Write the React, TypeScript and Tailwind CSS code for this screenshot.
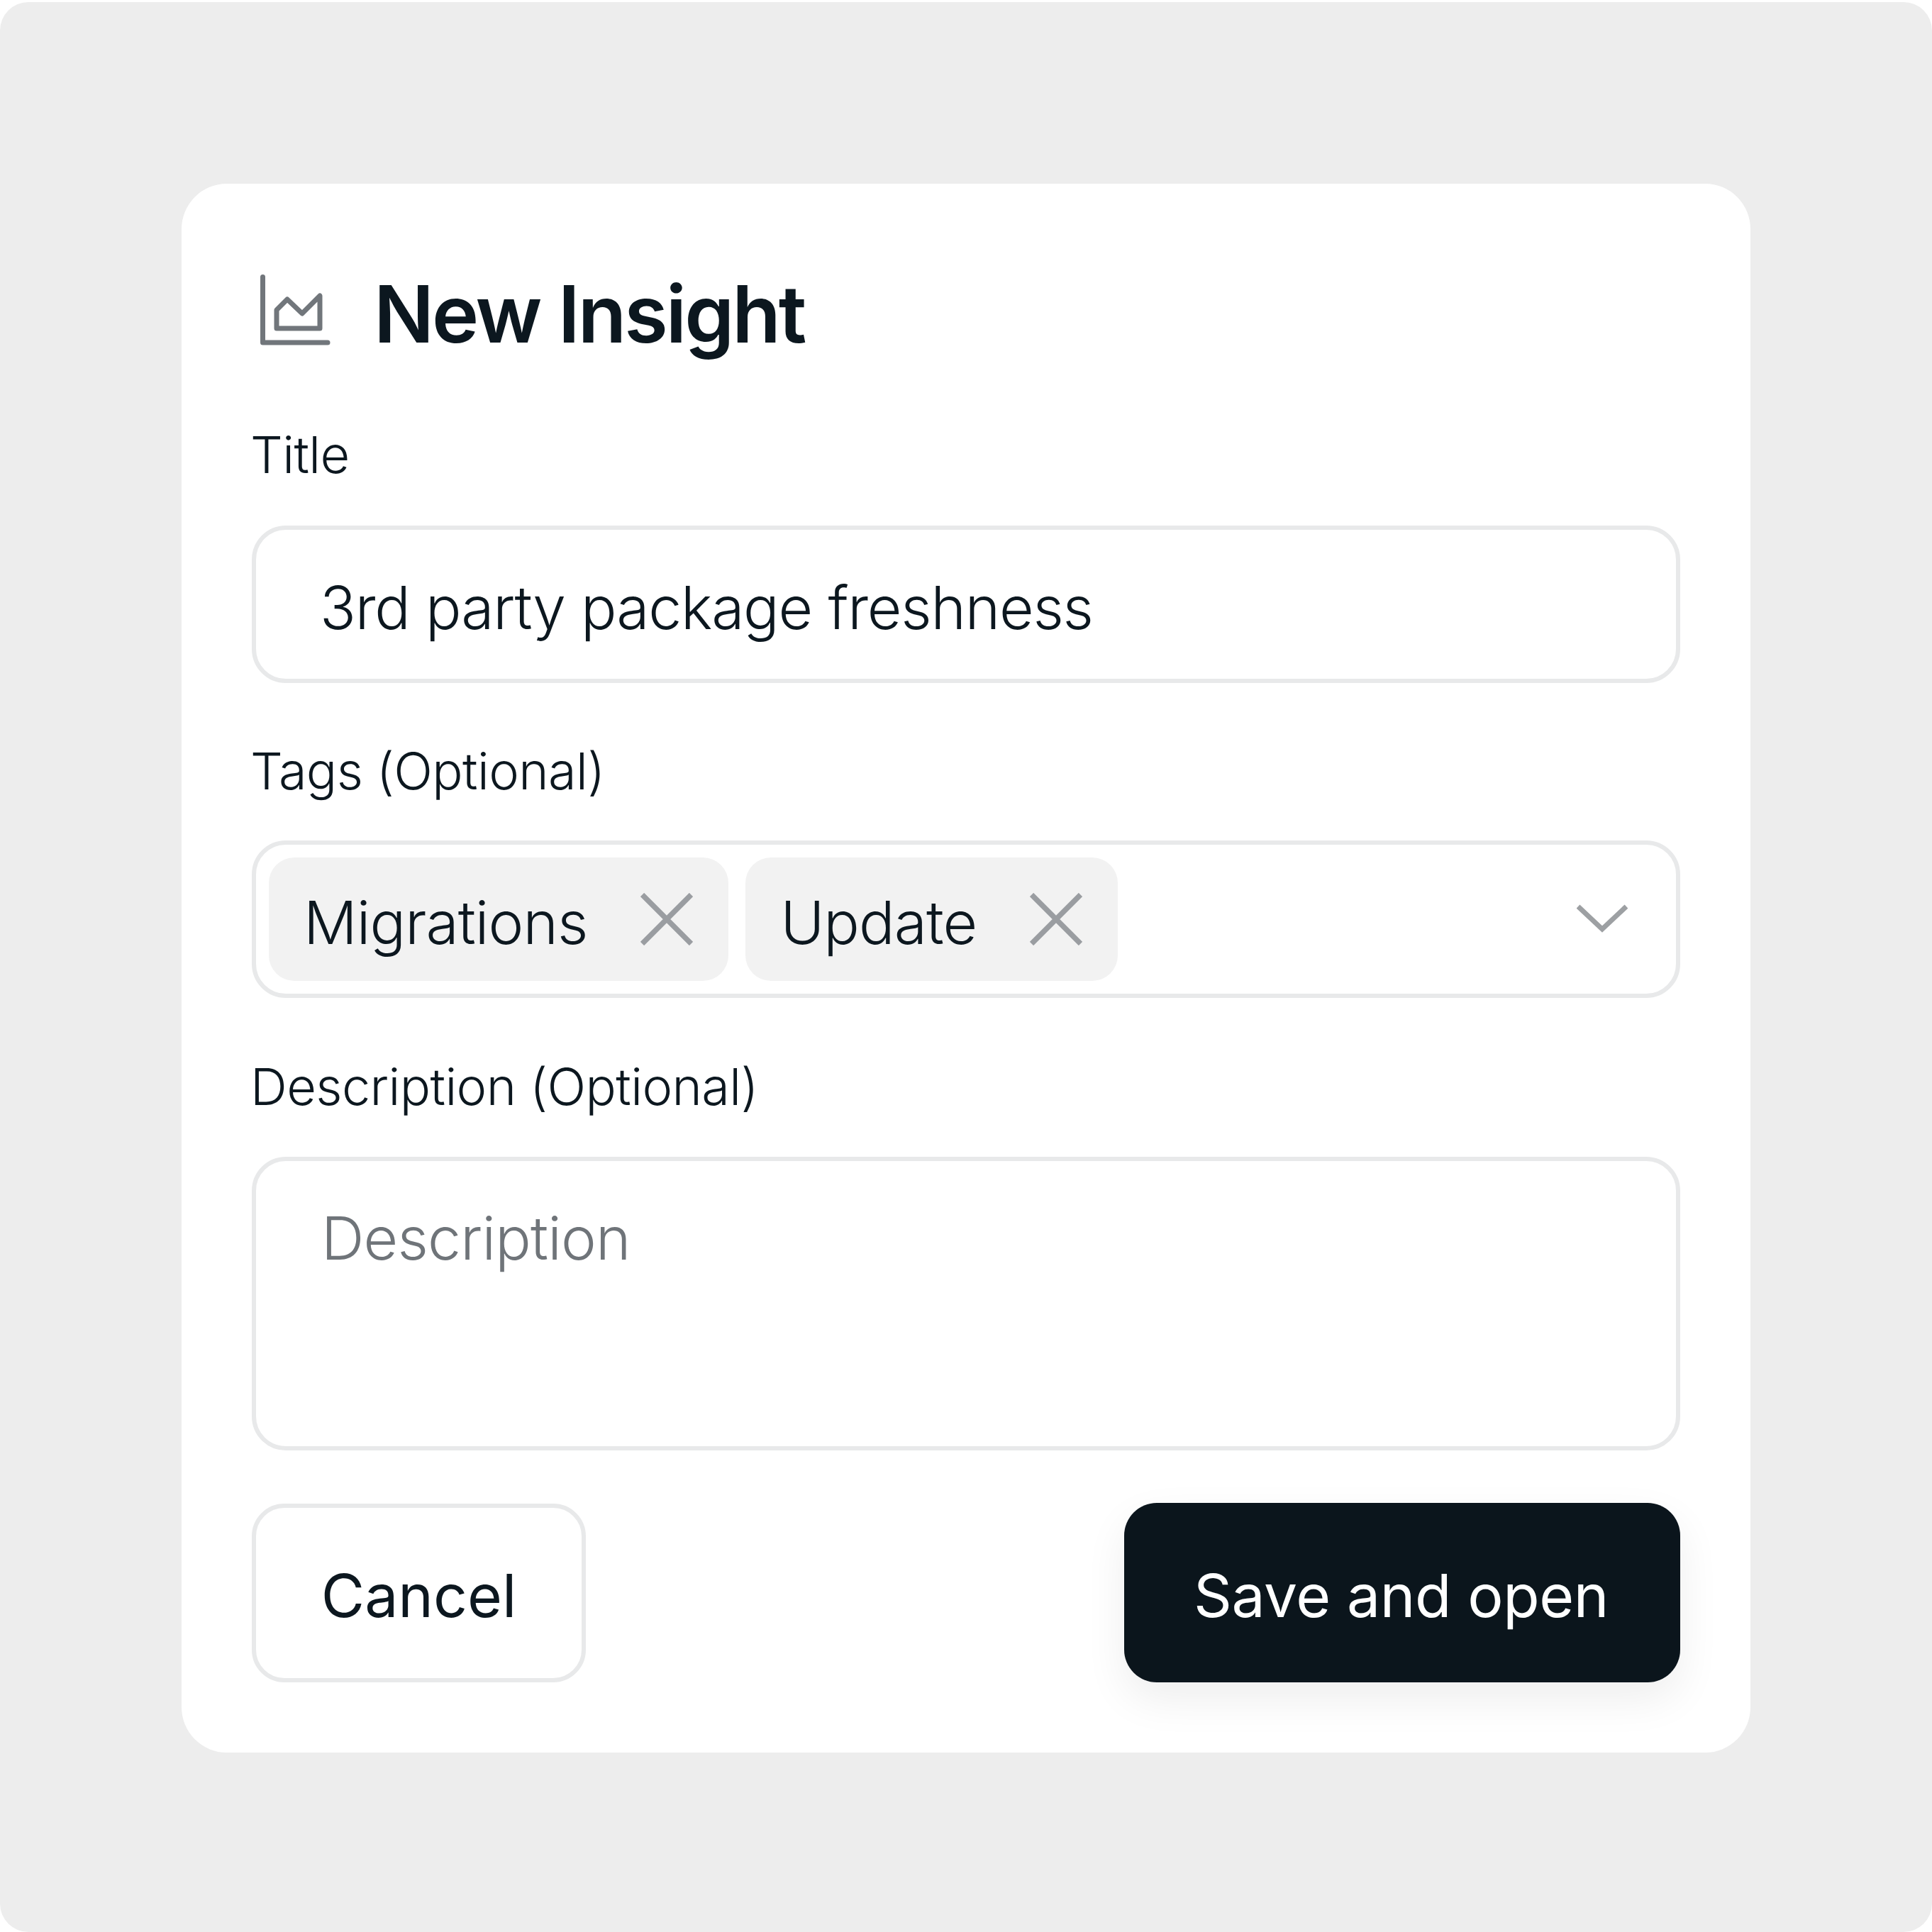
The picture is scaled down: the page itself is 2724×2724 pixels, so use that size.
import React from "react";

const ChartIcon = () => (
  <svg width="104" height="104" viewBox="0 0 104 104" fill="none" stroke="#71767b" strokeWidth="7" strokeLinecap="round" strokeLinejoin="round" className="shrink-0">
    <path d="M5.500 5.500V98H97" />
    <path d="M25 78V52L40 37L61 57L86 32V78Z" />
  </svg>
);

const CloseIcon = () => (
  <svg width="74" height="74" viewBox="0 0 74 74" fill="none" stroke="#9a9da1" strokeWidth="7.500" className="shrink-0">
    <path d="M2.500 2.500L71.500 71.500M71.500 2.500L2.500 71.500" />
  </svg>
);

const Chevron = () => (
  <svg width="72" height="42" viewBox="0 0 72 42" fill="none" stroke="#9da0a3" strokeWidth="7" className="shrink-0">
    <path d="M2 3L36 35L70 3" />
  </svg>
);

const Tag = ({ label }: { label: string }) => (
  <div className="flex h-[174px] items-center gap-[75px] rounded-[36px] bg-[#f2f2f2] pl-[49px] pr-[50px]">
    <span className="pt-[10px] text-[84px] font-light leading-none tracking-[-0.9px]">{label}</span>
    <CloseIcon />
  </div>
);

const Label = ({ children, className }: { children: React.ReactNode; className: string }) => (
  <label className={`-ml-[2px] text-[72px] font-light leading-[100px] tracking-[-0.6px] ${className}`}>{children}</label>
);

export default function App() {
  return (
    <div className="h-[2724px] overflow-hidden bg-white pt-[3px] font-['Inter',sans-serif] text-[#0c171f]">
      <div className="h-[2721px] rounded-[40px] bg-[#ededed] p-[256px]">
        <div className="flex h-[2212px] w-[2212px] flex-col rounded-[64px] bg-white px-[99px] pt-[126px]">
          <div className="flex h-[104px] items-center gap-[58px] pl-[10px]">
            <ChartIcon />
            <h1 className="pt-[10px] text-[112px] font-semibold leading-none tracking-[-3px]">New Insight</h1>
          </div>

          <Label className="mt-[102px]">Title</Label>
          <div className="mt-[50px] flex h-[222px] items-center rounded-[48px] border-[6px] border-[#e8e9ea] pl-[90px] pr-[92px] pt-[10px] text-[84px] font-light tracking-[-1.2px]">
            3rd party package freshness
          </div>

          <Label className="mt-[74px]">Tags (Optional)</Label>
          <div className="mt-[48px] flex h-[222px] items-center gap-[24px] rounded-[48px] border-[6px] border-[#e8e9ea] pl-[18px] pr-[68px]">
            <Tag label="Migrations" />
            <Tag label="Update" />
            <div className="ml-auto">
              <Chevron />
            </div>
          </div>

          <Label className="mt-[75px]">Description (Optional)</Label>
          <div className="mt-[49px] h-[414px] rounded-[48px] border-[6px] border-[#e8e9ea] px-[92px] pt-[67px] text-[84px] font-light leading-none tracking-[-0.8px] text-[#6f7479]">
            Description
          </div>

          <div className="mt-[74px] flex items-center justify-between">
            <button className="flex h-[252px] w-[471px] items-center justify-center rounded-[46px] border-[6px] border-[#e8e9ea] pt-[8px] text-[84px] font-normal">
              Cancel
            </button>
            <button className="flex h-[253px] w-[784px] items-center justify-center rounded-[46px] bg-[#0b151c] pr-[3px] pt-[8px] text-[84px] font-normal tracking-[-0.4px] text-white shadow-[0_24px_60px_rgba(0,0,0,0.07)]">
              Save and open
            </button>
          </div>
        </div>
      </div>
    </div>
  );
}
